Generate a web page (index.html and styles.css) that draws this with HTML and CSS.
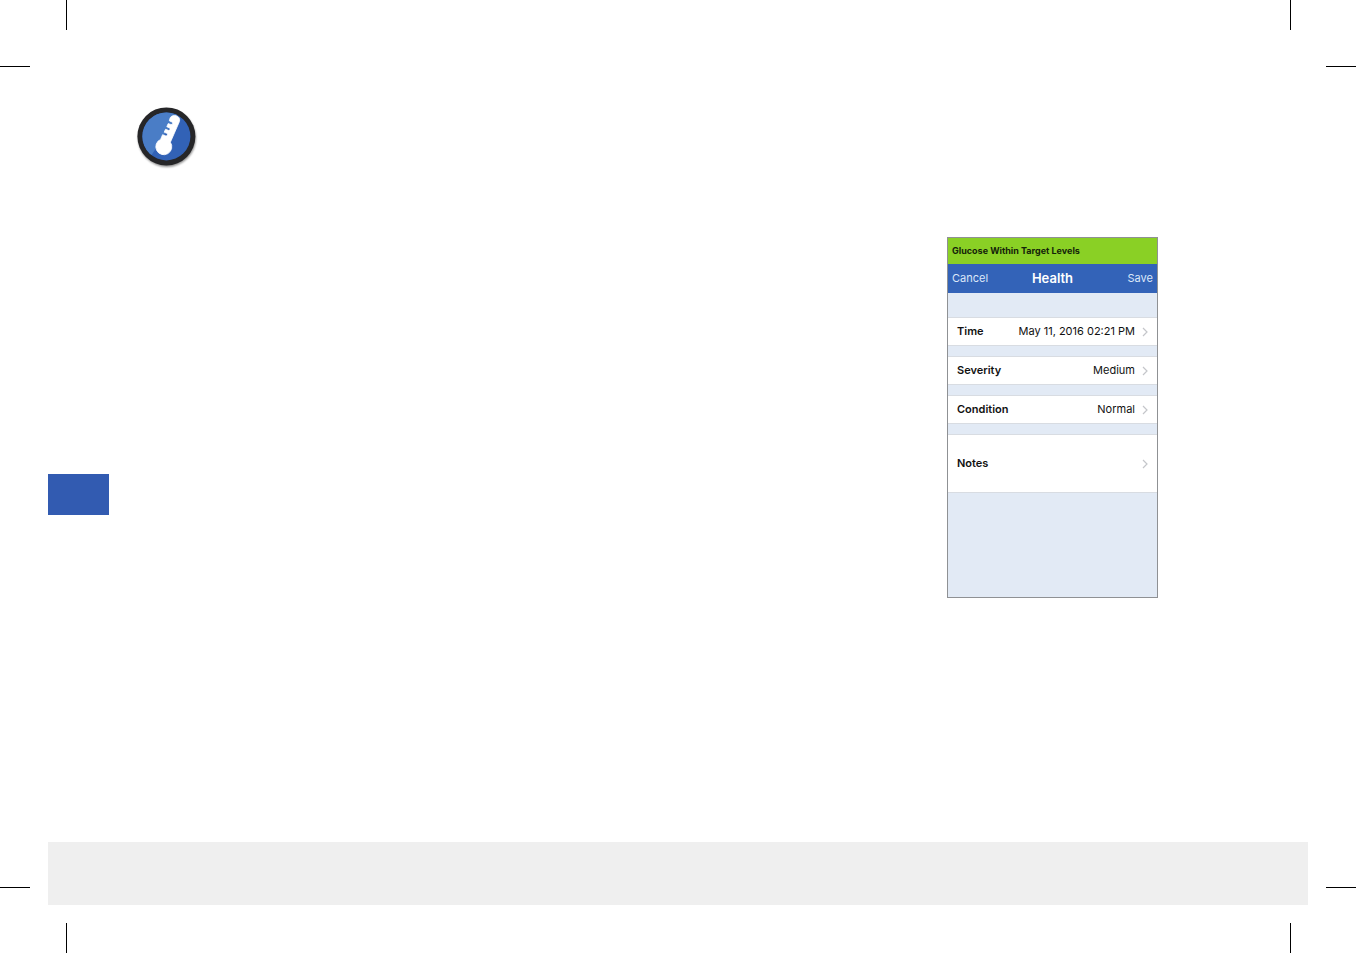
FILE: index.html
```html
<!DOCTYPE html>
<html lang="en">
<head>
<meta charset="utf-8">
<title>Health</title>
<link rel="stylesheet" href="styles.css">
</head>
<body>
<div class="sheet">
  <div class="crop top left"></div>
  <div class="crop top right"></div>
  <div class="crop bottom left"></div>
  <div class="crop bottom right"></div>

  <header class="sheet-header">
    <svg class="health-icon" viewBox="0 0 64 66" role="img" aria-label="Health">
      <defs>
        <filter id="soft" x="-20%" y="-20%" width="140%" height="140%"><feGaussianBlur stdDeviation="1.2"/></filter>
        <clipPath id="disc"><circle cx="31.4" cy="31.4" r="24"/></clipPath>
      </defs>
      <circle cx="32" cy="33.2" r="28.8" fill="#000" opacity=".45" filter="url(#soft)"/>
      <circle cx="31.4" cy="31.4" r="29" fill="#262628"/>
      <circle cx="31.4" cy="31.4" r="24" fill="#3262b6"/>
      <path d="M0 0H49L14 54H0Z" fill="#4a7dc6" clip-path="url(#disc)"/>
      <path d="M35.2 12.8C36.3 10.8 39 9.9 41.5 10.9C44.4 12 45.3 14.2 44.3 16.8L35.4 37.2A8 8 0 1 1 25.6 34.4L27.6 29.7L30.4 30.8C32.6 31.4 33.2 28.9 31.4 28.1L29.2 27.2L30.5 24.3L33.2 25.3C35.2 25.8 35.8 23.5 34.1 22.7L31.8 21.7L33.2 18.6L35.8 19.5C37.8 20 38.3 17.7 36.7 16.9L34.3 15.8Z" fill="#fff" stroke="#fff" stroke-width=".8" stroke-linejoin="round"/>
    </svg>
  </header>

  <main class="content">
    <div class="page-tab"></div>
    <section class="phone">
      <p class="status">Glucose Within Target Levels</p>
      <div class="navbar">
        <button class="nav-button" type="button">Cancel</button>
        <h1 class="nav-title">Health</h1>
        <button class="nav-button save" type="button">Save</button>
      </div>
      <div class="rows">
        <button class="row" type="button">
          <span class="label">Time</span><span class="value">May 11, 2016 02:21 PM</span>
          <svg class="chevron" viewBox="0 0 6 10" aria-hidden="true"><path d="M1 1L5 5L1 9"/></svg>
        </button>
        <button class="row" type="button">
          <span class="label">Severity</span><span class="value">Medium</span>
          <svg class="chevron" viewBox="0 0 6 10" aria-hidden="true"><path d="M1 1L5 5L1 9"/></svg>
        </button>
        <button class="row" type="button">
          <span class="label">Condition</span><span class="value">Normal</span>
          <svg class="chevron" viewBox="0 0 6 10" aria-hidden="true"><path d="M1 1L5 5L1 9"/></svg>
        </button>
        <button class="row notes" type="button">
          <span class="label">Notes</span><span class="value"></span>
          <svg class="chevron" viewBox="0 0 6 10" aria-hidden="true"><path d="M1 1L5 5L1 9"/></svg>
        </button>
      </div>
    </section>
  </main>

  <footer class="footer-band"></footer>
</div>
</body>
</html>
```

FILE: styles.css
```css
* {
  box-sizing: border-box;
}

body {
  margin: 0;
  background: #fff;
  color: #111;
  font-family: Inter, "Liberation Sans", sans-serif;
}

.sheet {
  position: relative;
  display: flex;
  flex-direction: column;
  min-height: 100vh;
  padding: 105px 48px 48px;
}

/* Printer's crop marks: one vertical and one horizontal rule per corner */
.crop {
  position: absolute;
  width: 67px;
  height: 67px;
  background-image: linear-gradient(#000, #000), linear-gradient(#000, #000);
  background-repeat: no-repeat;
  background-size: 1px 30px, 30px 1px;
}

.crop.top { top: 0; }
.crop.bottom { bottom: 0; }
.crop.left { left: 0; }
.crop.right { right: 0; width: 66px; }
.crop.bottom { height: 66px; }
.crop.top.left { background-position: right top, left bottom; }
.crop.top.right { background-position: left top, right bottom; }
.crop.bottom.left { background-position: right bottom, left top; }
.crop.bottom.right { background-position: left bottom, right top; }

.sheet-header {
  padding-left: 87px;
  margin-bottom: 66px;
}

.health-icon {
  display: block;
  width: 64px;
  height: 66px;
}

.content {
  flex: 1;
  display: flex;
  justify-content: space-between;
  align-items: flex-start;
  padding-right: 150px;
}

.page-tab {
  width: 61px;
  height: 41px;
  margin-top: 237px;
  background: #325bb1;
}

.phone {
  width: 211px;
  padding-bottom: 104px;
  border: 1px solid #8f9194;
  background: #e2eaf5;
}

.status {
  margin: 0;
  padding: 0 4px;
  background: #8ad025;
  color: #14230a;
  font-size: 9px;
  font-weight: 700;
  line-height: 26px;
}

.navbar {
  display: grid;
  grid-template-columns: 1fr auto 1fr;
  align-items: center;
  padding: 0 4px;
  background: #3363b8;
  color: #fff;
  line-height: 29px;
}

.nav-button {
  padding: 0;
  border: 0;
  background: none;
  color: #dce7f8;
  font: inherit;
  font-size: 11px;
  text-align: left;
}

.save {
  text-align: right;
}

.nav-title {
  margin: 0;
  font-size: 13px;
  font-weight: 600;
}

.rows {
  display: grid;
  gap: 10px;
  padding-top: 24px;
}

.row {
  display: flex;
  align-items: center;
  width: 100%;
  padding: 0 9px;
  border: solid #d8dce2;
  border-width: 1px 0;
  background: #fff;
  color: #111;
  font: inherit;
  font-size: 11px;
  line-height: 27px;
  text-align: left;
}

.notes {
  line-height: 57px;
}

.label {
  font-weight: 600;
}

.value {
  flex: 1;
  text-align: right;
}

.chevron {
  width: 6px;
  height: 10px;
  margin-left: 7px;
  fill: none;
  stroke: #c4c6ca;
  stroke-width: 1.2;
}

.footer-band {
  height: 63px;
  background: #efefef;
}
```
